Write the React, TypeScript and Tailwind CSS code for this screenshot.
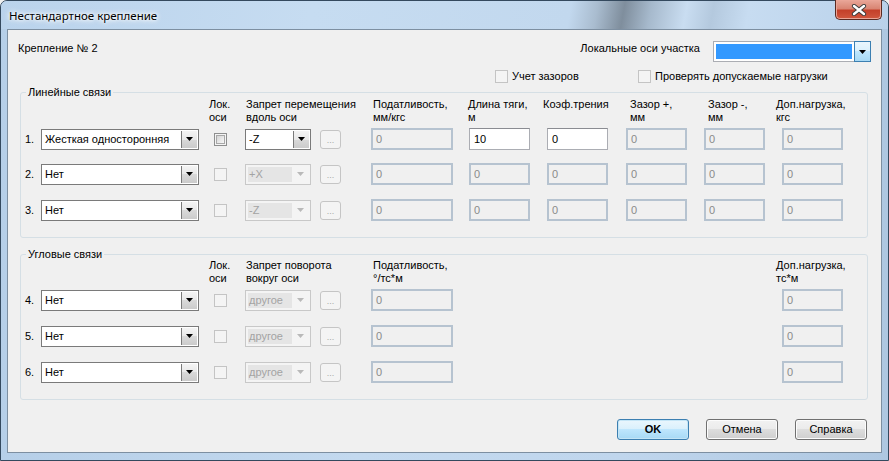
import React from "react";

const font = "font-['Liberation_Sans',Arial,sans-serif]";

function Arrow({ color = "#000" }: { color?: string }) {
  return (
    <svg width="7" height="4" viewBox="0 0 7 4">
      <path d="M0 0H7L3.5 4Z" fill={color} />
    </svg>
  );
}

function Combo({ w, text }: { w: string; text: string }) {
  return (
    <div className={`flex h-[21px] border border-[#7a7a7a] bg-white ${w}`}>
      <div className="flex flex-1 items-center pl-[3px] text-black">{text}</div>
      <div className="m-[1px] ml-0 flex w-[16px] items-center justify-center border-l border-[#7a7a7a] bg-[linear-gradient(#f4f4f4,#e8e8e8_50%,#d9d9d9_50%,#cbcbcb)]">
        <Arrow />
      </div>
    </div>
  );
}

function AxisCombo({ text, disabled }: { text: string; disabled?: boolean }) {
  if (!disabled) {
    return (
      <div className="flex h-[21px] w-[66px] border border-[#7a7a7a] bg-white">
        <div className="flex flex-1 items-center pl-[3px] text-black">{text}</div>
        <div className="m-[1px] ml-0 flex w-[16px] items-center justify-center border-l border-[#7a7a7a] bg-[linear-gradient(#f4f4f4,#e8e8e8_50%,#d9d9d9_50%,#cbcbcb)]">
          <Arrow />
        </div>
      </div>
    );
  }
  return (
    <div className="flex h-[21px] w-[66px] border border-[#c8c8c8] bg-[#f4f4f4] p-[2px]">
      <div className="flex w-[44px] items-center bg-[#e5e5e5] pl-[1px] text-[#a3a3a3]">{text}</div>
      <div className="flex flex-1 items-center justify-center">
        <Arrow color="#b9b9b9" />
      </div>
    </div>
  );
}

function Check({ enabled }: { enabled?: boolean }) {
  return enabled ? (
    <div className="h-[13px] w-[13px] border border-[#8e8f8f] bg-[#f4f4f4] p-[1px]">
      <div className="h-full w-full border border-[#a8a8a8] bg-[linear-gradient(135deg,#d4d4d4,#f8f8f8)]" />
    </div>
  ) : (
    <div className="h-[13px] w-[13px] border border-[#c4c4c4] bg-[#f4f4f4]" />
  );
}

function Dots() {
  return (
    <div className="flex h-[19px] w-[21px] items-end justify-center rounded-[3px] border border-[#c5c5c5] bg-[#f4f4f4] pb-[3px] text-[9px] leading-[9px] text-[#a8a8a8]">
      ...
    </div>
  );
}

function Field({ w, value, enabled }: { w: string; value: string; enabled?: boolean }) {
  return enabled ? (
    <div className={`flex h-[22px] items-center border border-[#abadb3] border-t-[#8a8c92] bg-white pl-[4px] text-black ${w}`}>{value}</div>
  ) : (
    <div className={`flex h-[22px] items-center border-2 border-[#b6c3d0] bg-[#f0f0f0] pl-[3px] text-[#8a8a8a] ${w}`}>{value}</div>
  );
}

function Head({ w, l1, l2 }: { w: string; l1: string; l2?: string }) {
  return (
    <div className={`flex shrink-0 flex-col leading-[13px] ${w}`}>
      <span>{l1}</span>
      <span>{l2 ?? "\u00a0"}</span>
    </div>
  );
}

function Group({ title, children, pt }: { title: string; children: React.ReactNode; pt: string }) {
  return (
    <div className={`relative mx-[12px] mr-[13px] rounded-[3px] border border-[#d5dfe5] pl-[4px] ${pt}`}>
      <span className="absolute left-[5px] top-[-7px] bg-[#f0f0f0] px-[2px] leading-[13px]">{title}</span>
      {children}
    </div>
  );
}

function LinRow({ n, combo, axis, first, cls }: { n: string; combo: string; axis: string; first?: boolean; cls?: string }) {
  return (
    <div className={`flex h-[22px] items-center ${cls ?? ""}`}>
      <span className="w-[16px]">{n}</span>
      <Combo w="w-[158px]" text={combo} />
      <div className="ml-[15px]">
        <Check enabled={first} />
      </div>
      <div className="ml-[18px]">
        <AxisCombo text={axis} disabled={!first} />
      </div>
      <div className="ml-[9px]">
        <Dots />
      </div>
      <div className="ml-[30px] flex items-center">
        <Field w="w-[82px]" value="0" />
        <div className="ml-[16px]">
          <Field w="w-[61px]" value={first ? "10" : "0"} enabled={first} />
        </div>
        <div className="ml-[17px]">
          <Field w="w-[61px]" value="0" enabled={first} />
        </div>
        <div className="ml-[18px]">
          <Field w="w-[61px]" value="0" />
        </div>
        <div className="ml-[17px]">
          <Field w="w-[61px]" value="0" />
        </div>
        <div className="ml-[17px]">
          <Field w="w-[61px]" value="0" />
        </div>
      </div>
    </div>
  );
}

function AngRow({ n, cls }: { n: string; cls?: string }) {
  return (
    <div className={`flex h-[22px] items-center ${cls ?? ""}`}>
      <span className="w-[16px]">{n}</span>
      <Combo w="w-[158px]" text="Нет" />
      <div className="ml-[15px]">
        <Check />
      </div>
      <div className="ml-[18px]">
        <AxisCombo text="другое" disabled />
      </div>
      <div className="ml-[9px]">
        <Dots />
      </div>
      <div className="ml-[30px]">
        <Field w="w-[82px]" value="0" />
      </div>
      <div className="ml-[329px]">
        <Field w="w-[61px]" value="0" />
      </div>
    </div>
  );
}

function Btn({ label, def }: { label: string; def?: boolean }) {
  return (
    <div
      className={`flex h-[21px] w-[72px] items-center justify-center rounded-[3px] border ${
        def
          ? "border-[#3c7fb1] bg-[linear-gradient(#eaf6fd,#d9f0fc_50%,#bee6fd_50%,#a7d9f5)] font-bold shadow-[inset_0_0_0_1px_#c4e5f6]"
          : "border-[#707070] bg-[linear-gradient(#f2f2f2,#ebebeb_50%,#dddddd_50%,#cfcfcf)] shadow-[inset_0_0_0_1px_#fcfcfc]"
      }`}
    >
      {label}
    </div>
  );
}

export default function App() {
  return (
    <div className={`${font} h-[461px] w-[889px] overflow-hidden bg-[#f0f0f0]`}>
      <div className="flex h-[461px] w-[889px] flex-col rounded-t-[7px] border border-[#34495e] bg-[linear-gradient(90deg,#b6cfe8,#c3d9ef_40%,#c0d6ed_70%,#aec7e1)]">
        {/* title bar */}
        <div className="relative flex h-[28px] shrink-0 items-start rounded-t-[6px] bg-[linear-gradient(100deg,#bad3ec_0%,#c6dcf1_35%,#c2d8ee_64%,#a9bccf_67%,#7f8e9d_70%,#a6b9cc_73%,#c9ddf1_77%,#b4c9de_80%,#c7dcf1_84%,#b9d1ea_100%)]">
          <span className="ml-[8px] mt-[7px] font-['Noto_Sans',sans-serif] text-[11.5px] leading-[16px] text-black [text-shadow:0_0_6px_#fff,0_0_6px_#fff,0_0_3px_#fff]">
            Нестандартное крепление
          </span>
          <div className="absolute right-[6px] top-[-1px] flex h-[20px] w-[47px] items-center justify-center rounded-b-[5px] border border-[#5a2a22] border-t-0 bg-[linear-gradient(#e9a799,#d98573_45%,#c4402a_55%,#d0573e)] shadow-[inset_0_0_0_1px_#eaa597]">
            <svg width="16" height="12" viewBox="0 0 16 12">
              <path d="M3 2L13 10M13 2L3 10" stroke="#3b3b3b" strokeWidth="4.2" strokeLinecap="round" />
              <path d="M3 2L13 10M13 2L3 10" stroke="#ffffff" strokeWidth="2.4" strokeLinecap="round" />
            </svg>
          </div>
        </div>
        {/* client */}
        <div className="mx-[6px] mb-[7px] flex flex-1 flex-col border border-[#7d8fa1] bg-[#f0f0f0] text-[11px] text-black">
          {/* top row */}
          <div className="mt-[11px] flex h-[21px] items-start pl-[10px] pr-[10px] leading-[13px]">
            <span className="mt-[1px]">Крепление № 2</span>
            <span className="ml-auto mt-[1px]">Локальные оси участка</span>
            <div className="ml-[13px] flex h-[21px] w-[158px]">
              <div className="flex flex-1 border border-r-0 border-[#abadb3] bg-white py-[2px] pl-[2px] pr-[2px]">
                <div className="flex-1 bg-[#3399ff]" />
              </div>
              <div className="flex w-[17px] items-center justify-center border border-[#3c7fb1] bg-[linear-gradient(#eaf6fd,#d9f0fc_50%,#bee6fd_50%,#a7d9f5)]">
                <Arrow />
              </div>
            </div>
          </div>
          {/* checkbox row */}
          <div className="mt-[8px] flex h-[13px] items-center pl-[487px]">
            <div className="flex w-[143px] items-center">
              <Check />
              <span className="ml-[4px]">Учет зазоров</span>
            </div>
            <Check />
            <span className="ml-[4px]">Проверять допускаемые нагрузки</span>
          </div>
          {/* group 1 */}
          <div className="mt-[9px]">
            <Group title="Линейные связи" pt="pt-[5px] pb-[16px]">
              <div className="flex">
                <div className="w-[184px] shrink-0" />
                <Head w="w-[37px]" l1="Лок." l2="оси" />
                <Head w="w-[127px]" l1="Запрет перемещения" l2="вдоль оси" />
                <Head w="w-[95px]" l1="Податливость," l2="мм/кгс" />
                <Head w="w-[75px]" l1="Длина тяги," l2="м" />
                <Head w="w-[87px]" l1="Коэф.трения" />
                <Head w="w-[78px]" l1="Зазор +," l2="мм" />
                <Head w="w-[68px]" l1="Зазор -," l2="мм" />
                <Head w="w-[80px]" l1="Доп.нагрузка," l2="кгс" />
              </div>
              <LinRow n="1." combo="Жесткая односторонняя" axis="-Z" first cls="mt-[4px]" />
              <LinRow n="2." combo="Нет" axis="+X" cls="mt-[13px]" />
              <LinRow n="3." combo="Нет" axis="-Z" cls="mt-[14px]" />
            </Group>
          </div>
          {/* group 2 */}
          <div className="mt-[16px]">
            <Group title="Угловые связи" pt="pt-[4px] pb-[16px]">
              <div className="flex">
                <div className="w-[184px] shrink-0" />
                <Head w="w-[37px]" l1="Лок." l2="оси" />
                <Head w="w-[127px]" l1="Запрет поворота" l2="вокруг оси" />
                <Head w="w-[403px]" l1="Податливость," l2="°/тс*м" />
                <Head w="w-[80px]" l1="Доп.нагрузка," l2="тс*м" />
              </div>
              <AngRow n="4." cls="mt-[4px]" />
              <AngRow n="5." cls="mt-[14px]" />
              <AngRow n="6." cls="mt-[14px]" />
            </Group>
          </div>
          {/* buttons */}
          <div className="mt-[19px] flex justify-end gap-[17px] pr-[14px]">
            <Btn label="OK" def />
            <Btn label="Отмена" />
            <Btn label="Справка" />
          </div>
        </div>
      </div>
    </div>
  );
}
